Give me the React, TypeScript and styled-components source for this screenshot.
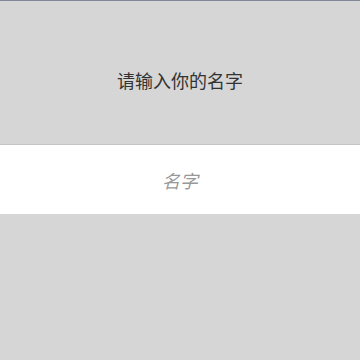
import styled, { createGlobalStyle } from 'styled-components'

const GlobalStyle = createGlobalStyle`
    html, body {
        margin: 0;
        padding: 0;
        background: #d6d6d6;
    }
    body {
        font-family: "Noto Sans CJK SC", "Noto Sans", sans-serif;
    }
`

const Page = styled.div`
    width: 360px;
    height: 360px;
    box-sizing: border-box;
    border-top: 1px solid #7f8799;
    background: #d6d6d6;
    display: flex;
    flex-direction: column;
`

const Title = styled.div`
    height: 143px;
    display: flex;
    align-items: center;
    justify-content: center;
    font-size: 18px;
    color: #333;
    padding-top: 14px;
    box-sizing: border-box;
`

const NameInput = styled.input`
    display: block;
    width: 100%;
    height: 70px;
    box-sizing: border-box;
    border: none;
    border-top: 1px solid #c4c4c4;
    background: #fff;
    outline: none;
    text-align: center;
    font-family: "Noto Sans CJK SC", "Noto Sans", sans-serif;
    font-size: 18px;
    color: #333;
    &::placeholder {
        color: #999;
        font-style: italic;
    }
`

export default function App() {
    return (
        <Page>
            <GlobalStyle />
            <Title>请输入你的名字</Title>
            <NameInput placeholder="名字" />
        </Page>
    )
}
